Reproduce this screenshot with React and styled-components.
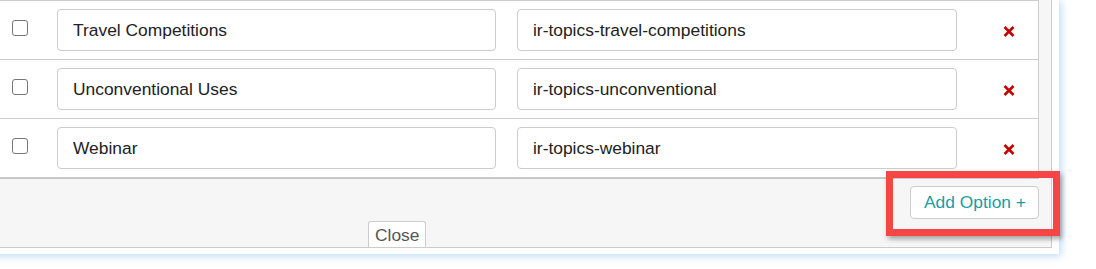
import React from "react";
import styled, { createGlobalStyle } from "styled-components";

const GlobalStyle = createGlobalStyle`
  body {
    margin: 0;
    background: #fff;
    overflow: hidden;
    font-family: "Liberation Sans", Arial, sans-serif;
  }
`;

const Page = styled.div`
  position: relative;
  width: 1096px;
  height: 269px;
`;

const Modal = styled.div`
  box-sizing: border-box;
  width: 1080px;
  margin: -1px 0 0 -21px;
  padding: 0 7px 6px 7px;
  background: #fff;
  box-shadow: 2px 2px 8px rgba(110, 170, 235, 0.45);
`;

const Panel = styled.div`
  box-sizing: border-box;
  border: 1px solid #ccc;
  background: #f6f6f6;
  padding: 0 12px;
`;

const Table = styled.div`
  background: #fff;
  border: 1px solid #ccc;
  border-bottom: 2px solid #c8c8c8;
`;

const Row = styled.div`
  display: flex;
  align-items: center;
  padding: 8px 0;
  & + & {
    border-top: 1px solid #ccc;
  }
`;

const CheckCell = styled.div`
  width: 57px;
  align-self: flex-start;
  padding-top: 11px;
  box-sizing: border-box;
  padding-left: 12px;
`;

const Check = styled.input.attrs({ type: "checkbox" })`
  appearance: none;
  display: block;
  margin: 0;
  width: 16px;
  height: 16px;
  border: 1px solid #767676;
  border-radius: 3px;
  background: #fff;
  box-sizing: border-box;
`;

const TextInput = styled.input`
  box-sizing: border-box;
  width: ${({ $w }) => $w}px;
  margin-left: ${({ $ml }) => $ml || 0}px;
  height: 42px;
  padding: 0 15px;
  border: 1px solid #ccc;
  border-radius: 4px;
  font-family: "Liberation Sans", Arial, sans-serif;
  font-size: 17.4px;
  color: #222;
  background: #fff;
  outline: none;
`;

const RemoveCell = styled.div`
  flex: 1;
  padding-left: 46px;
  padding-top: 2px;
  display: flex;
  align-items: center;
`;

const Footer = styled.div`
  display: flex;
  flex-direction: column;
  padding-top: 7px;
`;

const AddButton = styled.button`
  align-self: flex-end;
  box-sizing: border-box;
  width: 129px;
  height: 33px;
  padding: 0 12px 0 13px;
  border: 1px solid #ccc;
  border-radius: 4px;
  background: #fff;
  color: #1b9ca6;
  font-family: "Liberation Sans", Arial, sans-serif;
  font-size: 17.4px;
  text-align: left;
  white-space: nowrap;
`;

const CloseButton = styled.button`
  align-self: flex-start;
  box-sizing: border-box;
  margin: 2px 0 0 369px;
  height: 26px;
  padding: 0 6px;
  border: 1px solid #ccc;
  border-bottom: none;
  border-radius: 3px 3px 0 0;
  background: #fff;
  color: #555;
  font-family: "Liberation Sans", Arial, sans-serif;
  font-size: 17.4px;
  line-height: 24px;
`;

const Highlight = styled.div`
  position: absolute;
  left: 886px;
  top: 172px;
  width: 174px;
  height: 65px;
  box-sizing: border-box;
  border: 7px solid #f64545;
  box-shadow: 2px 3px 5px rgba(0, 0, 0, 0.35);
  pointer-events: none;
`;

const RemoveIcon = () => (
  <svg width="12" height="11" viewBox="0 0 12 11">
    <path d="M1.5 1 L10.5 10 M10.5 1 L1.5 10" stroke="#c80000" strokeWidth="2.6" />
  </svg>
);

const options = [
  { label: "Travel Competitions", value: "ir-topics-travel-competitions" },
  { label: "Unconventional Uses", value: "ir-topics-unconventional" },
  { label: "Webinar", value: "ir-topics-webinar" },
];

export default function App() {
  return (
    <Page>
      <GlobalStyle />
      <Modal>
        <Panel>
          <Table>
            {options.map((o) => (
              <Row key={o.value}>
                <CheckCell>
                  <Check />
                </CheckCell>
                <TextInput $w={439} defaultValue={o.label} />
                <TextInput $w={440} $ml={21} defaultValue={o.value} />
                <RemoveCell>
                  <RemoveIcon />
                </RemoveCell>
              </Row>
            ))}
          </Table>
          <Footer>
            <AddButton>Add Option +</AddButton>
            <CloseButton>Close</CloseButton>
          </Footer>
        </Panel>
      </Modal>
      <Highlight />
    </Page>
  );
}
